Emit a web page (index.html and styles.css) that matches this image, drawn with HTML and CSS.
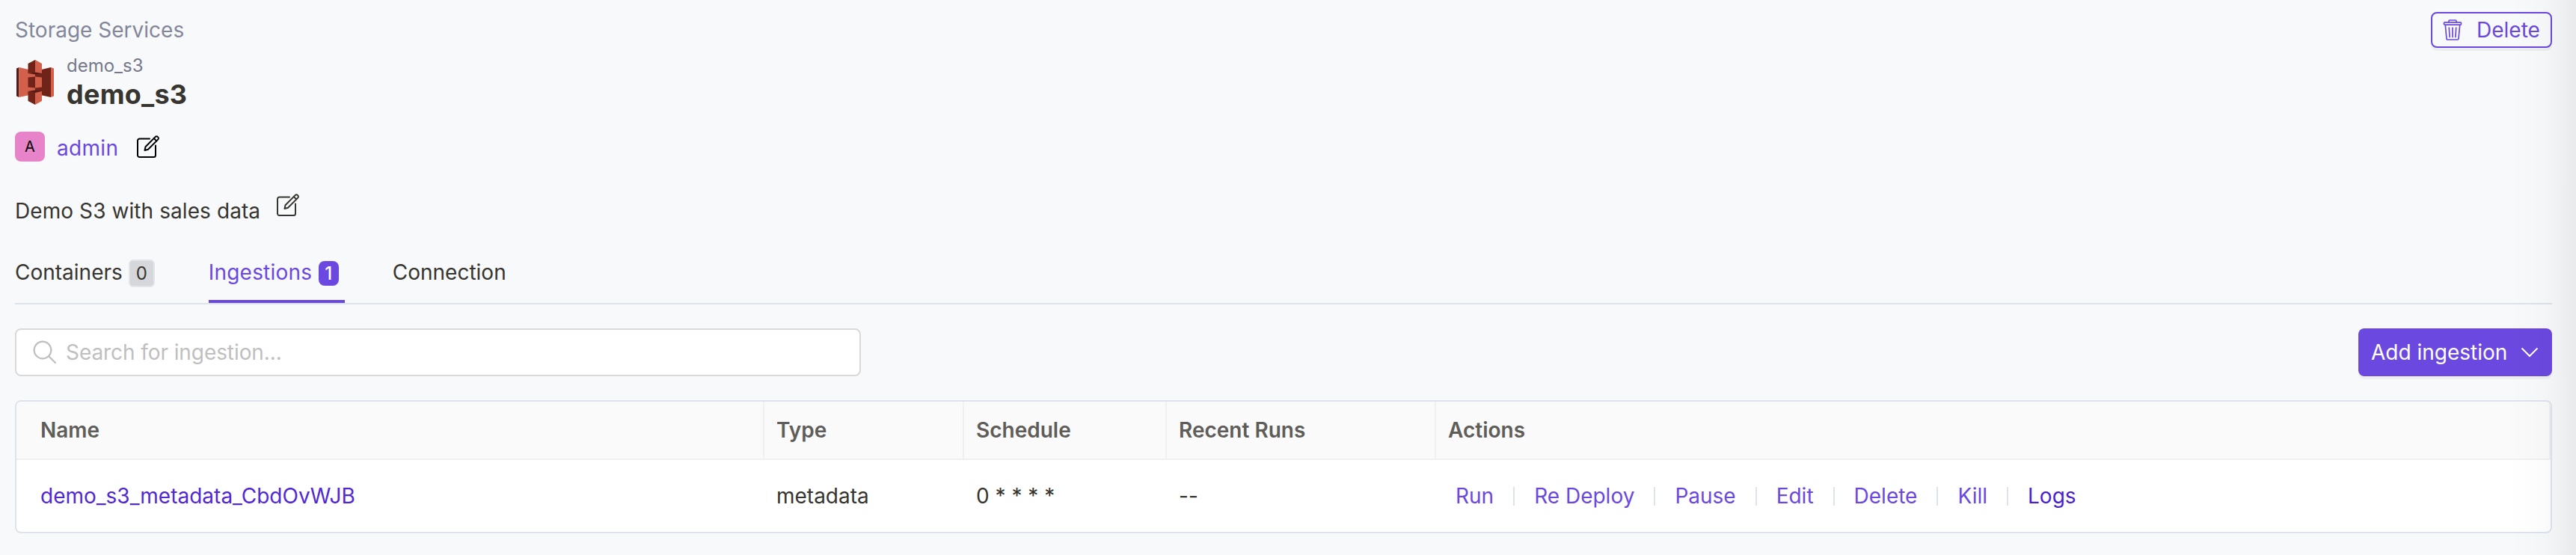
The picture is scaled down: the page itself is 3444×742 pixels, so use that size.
FILE: index.html
```html
<!DOCTYPE html>
<html lang="en">
<head>
<meta charset="utf-8">
<title>demo_s3</title>
<link rel="stylesheet" href="styles.css">
</head>
<body>
<svg width="0" height="0" class="defs">
  <symbol id="edit" viewBox="0 0 30 30" fill="none" stroke="currentColor" stroke-width="2" stroke-linejoin="round" stroke-linecap="round">
    <path d="M17 4.500H3.500A2.500 2.500 0 0 0 1 7V26.500A2.500 2.500 0 0 0 3.500 29H22.500A2.500 2.500 0 0 0 25 26.500V13.500"/>
    <path d="M10.500 20L11.500 15.200L24.800 1.900A2.500 2.500 0 0 1 28.300 5.400L15 18.700Z"/>
    <path d="M22.800 4L26.200 7.400"/>
  </symbol>
</svg>
<main class="page">
  <header class="top">
    <span class="crumb">Storage Services</span>
    <button class="btn btn-outline">
      <svg class="trash" viewBox="0 0 26 28" fill="none" stroke="currentColor" stroke-width="1.700" stroke-linejoin="round" stroke-linecap="round">
        <path d="M8 3.800V2.200Q8 1 9.200 1H16.800Q18 1 18 2.200V3.800"/>
        <rect x="1.500" y="3.900" width="23" height="3.200" rx="1.200"/>
        <path d="M3.300 7.500L5 25.800Q5.100 27 6.300 27H19.700Q20.900 27 21 25.800L22.700 7.500M8.300 11L9.100 23.500M13 11V23.500M17.700 11L16.900 23.500"/>
      </svg>
      <span>Delete</span>
    </button>
  </header>
  <section class="identity">
    <svg class="s3" viewBox="0 0 50 60">
      <path fill="#521b15" d="M0 11.500L3.500 10V50L0 48.500Z"/>
      <path fill="#d3604b" d="M3.500 10L25 15V45.500L3.500 50Z"/>
      <path fill="#702419" d="M25 15L46 10V50L25 45.500Z"/>
      <path fill="#d3604b" d="M46 10L50 11.500V48.500L46 50Z"/>
      <path fill="#702419" d="M15.500 23.500L25 22.500V37.500L15.500 36.500Z"/>
      <path fill="#d3604b" d="M25 22.500L34 23.500V36.500L25 37.500Z"/>
      <path fill="#521b15" d="M15.500 18L25 16.200L34 18L25 19.500Z"/>
      <path fill="#702419" d="M15.500 5L25 0V16.500L15.500 18Z"/>
      <path fill="#d3604b" d="M25 0L34 5V18L25 16.500Z"/>
      <path fill="#521b15" d="M15.500 42L25 40.500L34 42L25 44.500Z"/>
      <path fill="#702419" d="M15.500 42L25 44V60L15.500 55Z"/>
      <path fill="#d3604b" d="M25 44L34 42V55L25 60Z"/>
    </svg>
    <div class="names">
      <span class="name">demo_s3</span>
      <h1 class="title">demo_s3</h1>
    </div>
  </section>
  <section class="owner">
    <span class="avatar">A</span>
    <a class="owner-link">admin</a>
    <svg class="edit"><use href="#edit"/></svg>
  </section>
  <section class="description">
    <span>Demo S3 with sales data</span>
    <svg class="edit"><use href="#edit"/></svg>
  </section>
  <nav class="tabs">
    <a class="tab">Containers<span class="count">0</span></a>
    <a class="tab active">Ingestions<span class="count">1</span></a>
    <a class="tab">Connection</a>
  </nav>
  <div class="toolbar">
    <div class="search">
      <svg class="glass" viewBox="0 0 32 32" fill="none" stroke="currentColor" stroke-width="2.200" stroke-linecap="round"><circle cx="13" cy="13" r="11.400"/><path d="M21.500 21.500L30 30"/></svg>
      <span>Search for ingestion...</span>
    </div>
    <button class="btn btn-primary">
      <span>Add ingestion</span>
      <svg class="chevron" viewBox="0 0 24 14" fill="none" stroke="currentColor" stroke-width="2"><path d="M1.500 1.500L12 12L22.500 1.500"/></svg>
    </button>
  </div>
  <div class="table">
    <div class="row head">
      <div class="cell">Name</div><div class="cell">Type</div><div class="cell">Schedule</div><div class="cell">Recent Runs</div><div class="cell">Actions</div>
    </div>
    <div class="row">
      <div class="cell"><a class="link">demo_s3_metadata_CbdOvWJB</a></div>
      <div class="cell">metadata</div>
      <div class="cell">0 * * * *</div>
      <div class="cell">--</div>
      <div class="cell actions">
        <a>Run</a><i></i><a>Re Deploy</a><i></i><a>Pause</a><i></i><a>Edit</a><i></i><a>Delete</a><i></i><a>Kill</a><i></i><a class="link">Logs</a>
      </div>
    </div>
  </div>
</main>
<div class="edge"></div>
</body>
</html>
```

FILE: styles.css
```css
* { box-sizing: border-box; }
body {
  margin: 0;
  height: 742px;
  background: #f8f9fb;
  color: #37352f;
  font: 28px/44px Inter, "Liberation Sans", sans-serif;
  white-space: nowrap;
}
svg { display: block; flex: none; }
.defs { position: absolute; }
.page { padding: 16px 32px 0 20px; }
.top { display: flex; justify-content: space-between; height: 48px; }
.crumb { color: #83879a; line-height: 48px; }
.btn {
  display: flex;
  align-items: center;
  border-radius: 8px;
  font: inherit;
  box-shadow: 0 4px 0 rgba(0, 0, 0, 0.043);
}
.btn-outline {
  width: 162px;
  height: 48px;
  padding: 0 0 0 14px;
  gap: 19px;
  border: 2px solid #6b48df;
  background: transparent;
  color: #6b48df;
}
.trash { width: 26px; height: 28px; }
.identity { display: flex; gap: 17px; padding: 8px 0 0 2px; height: 88px; }
.s3 { width: 50px; height: 60px; margin-top: 8px; }
.names { display: flex; flex-direction: column; }
.name { font-size: 24px; line-height: 31px; color: #76798a; }
.title { margin: 1px 0 0; font-size: 36px; line-height: 44px; font-weight: 700; letter-spacing: 0.25px; }
.owner { display: flex; align-items: center; height: 40px; margin-top: 24px; }
.avatar {
  width: 40px;
  height: 40px;
  border-radius: 8px;
  background: #e784c9;
  color: #000;
  font-size: 20px;
  line-height: 40px;
  text-align: center;
}
.owner-link { color: #6b48df; margin: 4px 25px 0 16px; letter-spacing: 0.3px; }
.edit { width: 30px; height: 30px; color: #000; }
.description { display: flex; height: 44px; margin-top: 44px; letter-spacing: 0.08px; }
.description .edit { margin: -1px 0 0 22px; color: #37352f; }
.tabs { display: flex; gap: 64px; height: 65px; margin-top: 38px; border-bottom: 2px solid #dce3ec; }
.tab { display: flex; align-items: flex-start; height: 63px; line-height: 44px; }
.count {
  width: 35px;
  height: 37px;
  margin: 5px 8px 0;
  border: 2px solid #e3e4e7;
  border-radius: 6px;
  background: #d6d7db;
  font-size: 24px;
  line-height: 33px;
  text-align: center;
}
.active { width: 182px; color: #6b48df; border-bottom: 4px solid #6b48df; letter-spacing: 0.2px; }
.active .count {
  width: 27px;
  height: 33px;
  margin: 7px 8px 0 auto;
  border: 0;
  border-radius: 8px;
  background: #6b48df;
  color: #fff;
  font-weight: 500;
}
.toolbar { display: flex; justify-content: space-between; margin-top: 32px; height: 64px; }
.search {
  display: flex;
  align-items: center;
  width: 1131px;
  padding-left: 22px;
  gap: 12px;
  border: 2px solid #d9d9d9;
  border-radius: 8px;
  background: #fff;
  color: #bfbfbf;
  letter-spacing: -0.08px;
}
.glass { width: 32px; height: 32px; }
.btn-primary { width: 259px; height: 64px; padding: 0 0 0 17px; gap: 18px; border: 0; background: #6b48df; color: #fff; }
.chevron { width: 24px; height: 14px; }
.table { margin-top: 32px; height: 178px; border: 2px solid #dce3ec; border-radius: 8px; background: #fff; overflow: hidden; }
.row { display: grid; grid-template-columns: 1000px 267px 271px 360px 1fr; height: 96px; align-items: center; }
.cell { padding-left: 16px; }
.cell:first-child { padding-left: 32px; }
.head { height: 78px; background: #fafafa; border-bottom: 2px solid #f0f0f0; font-weight: 600; color: #5f5d59; }
.head .cell { height: 76px; line-height: 76px; border-right: 2px solid #f0f0f0; }
.link { color: #5128d3; }
.actions { display: flex; align-items: center; padding-left: 26px; color: #6b48df; }
.actions i { width: 2px; height: 25px; margin: 0 26px; background: #dce3ec; }
.actions .link { color: #4a1fd0; }
/* soft shadow cast by the neighbouring panel on the right */
.edge {
  position: absolute;
  top: 0;
  right: 0;
  width: 100px;
  height: 742px;
  pointer-events: none;
  background: linear-gradient(to left, rgba(0, 0, 0, 0.06), rgba(0, 0, 0, 0.042) 16px, rgba(0, 0, 0, 0.025) 32px, rgba(0, 0, 0, 0.013) 48px, rgba(0, 0, 0, 0.006) 64px, transparent 90px);
}
```
